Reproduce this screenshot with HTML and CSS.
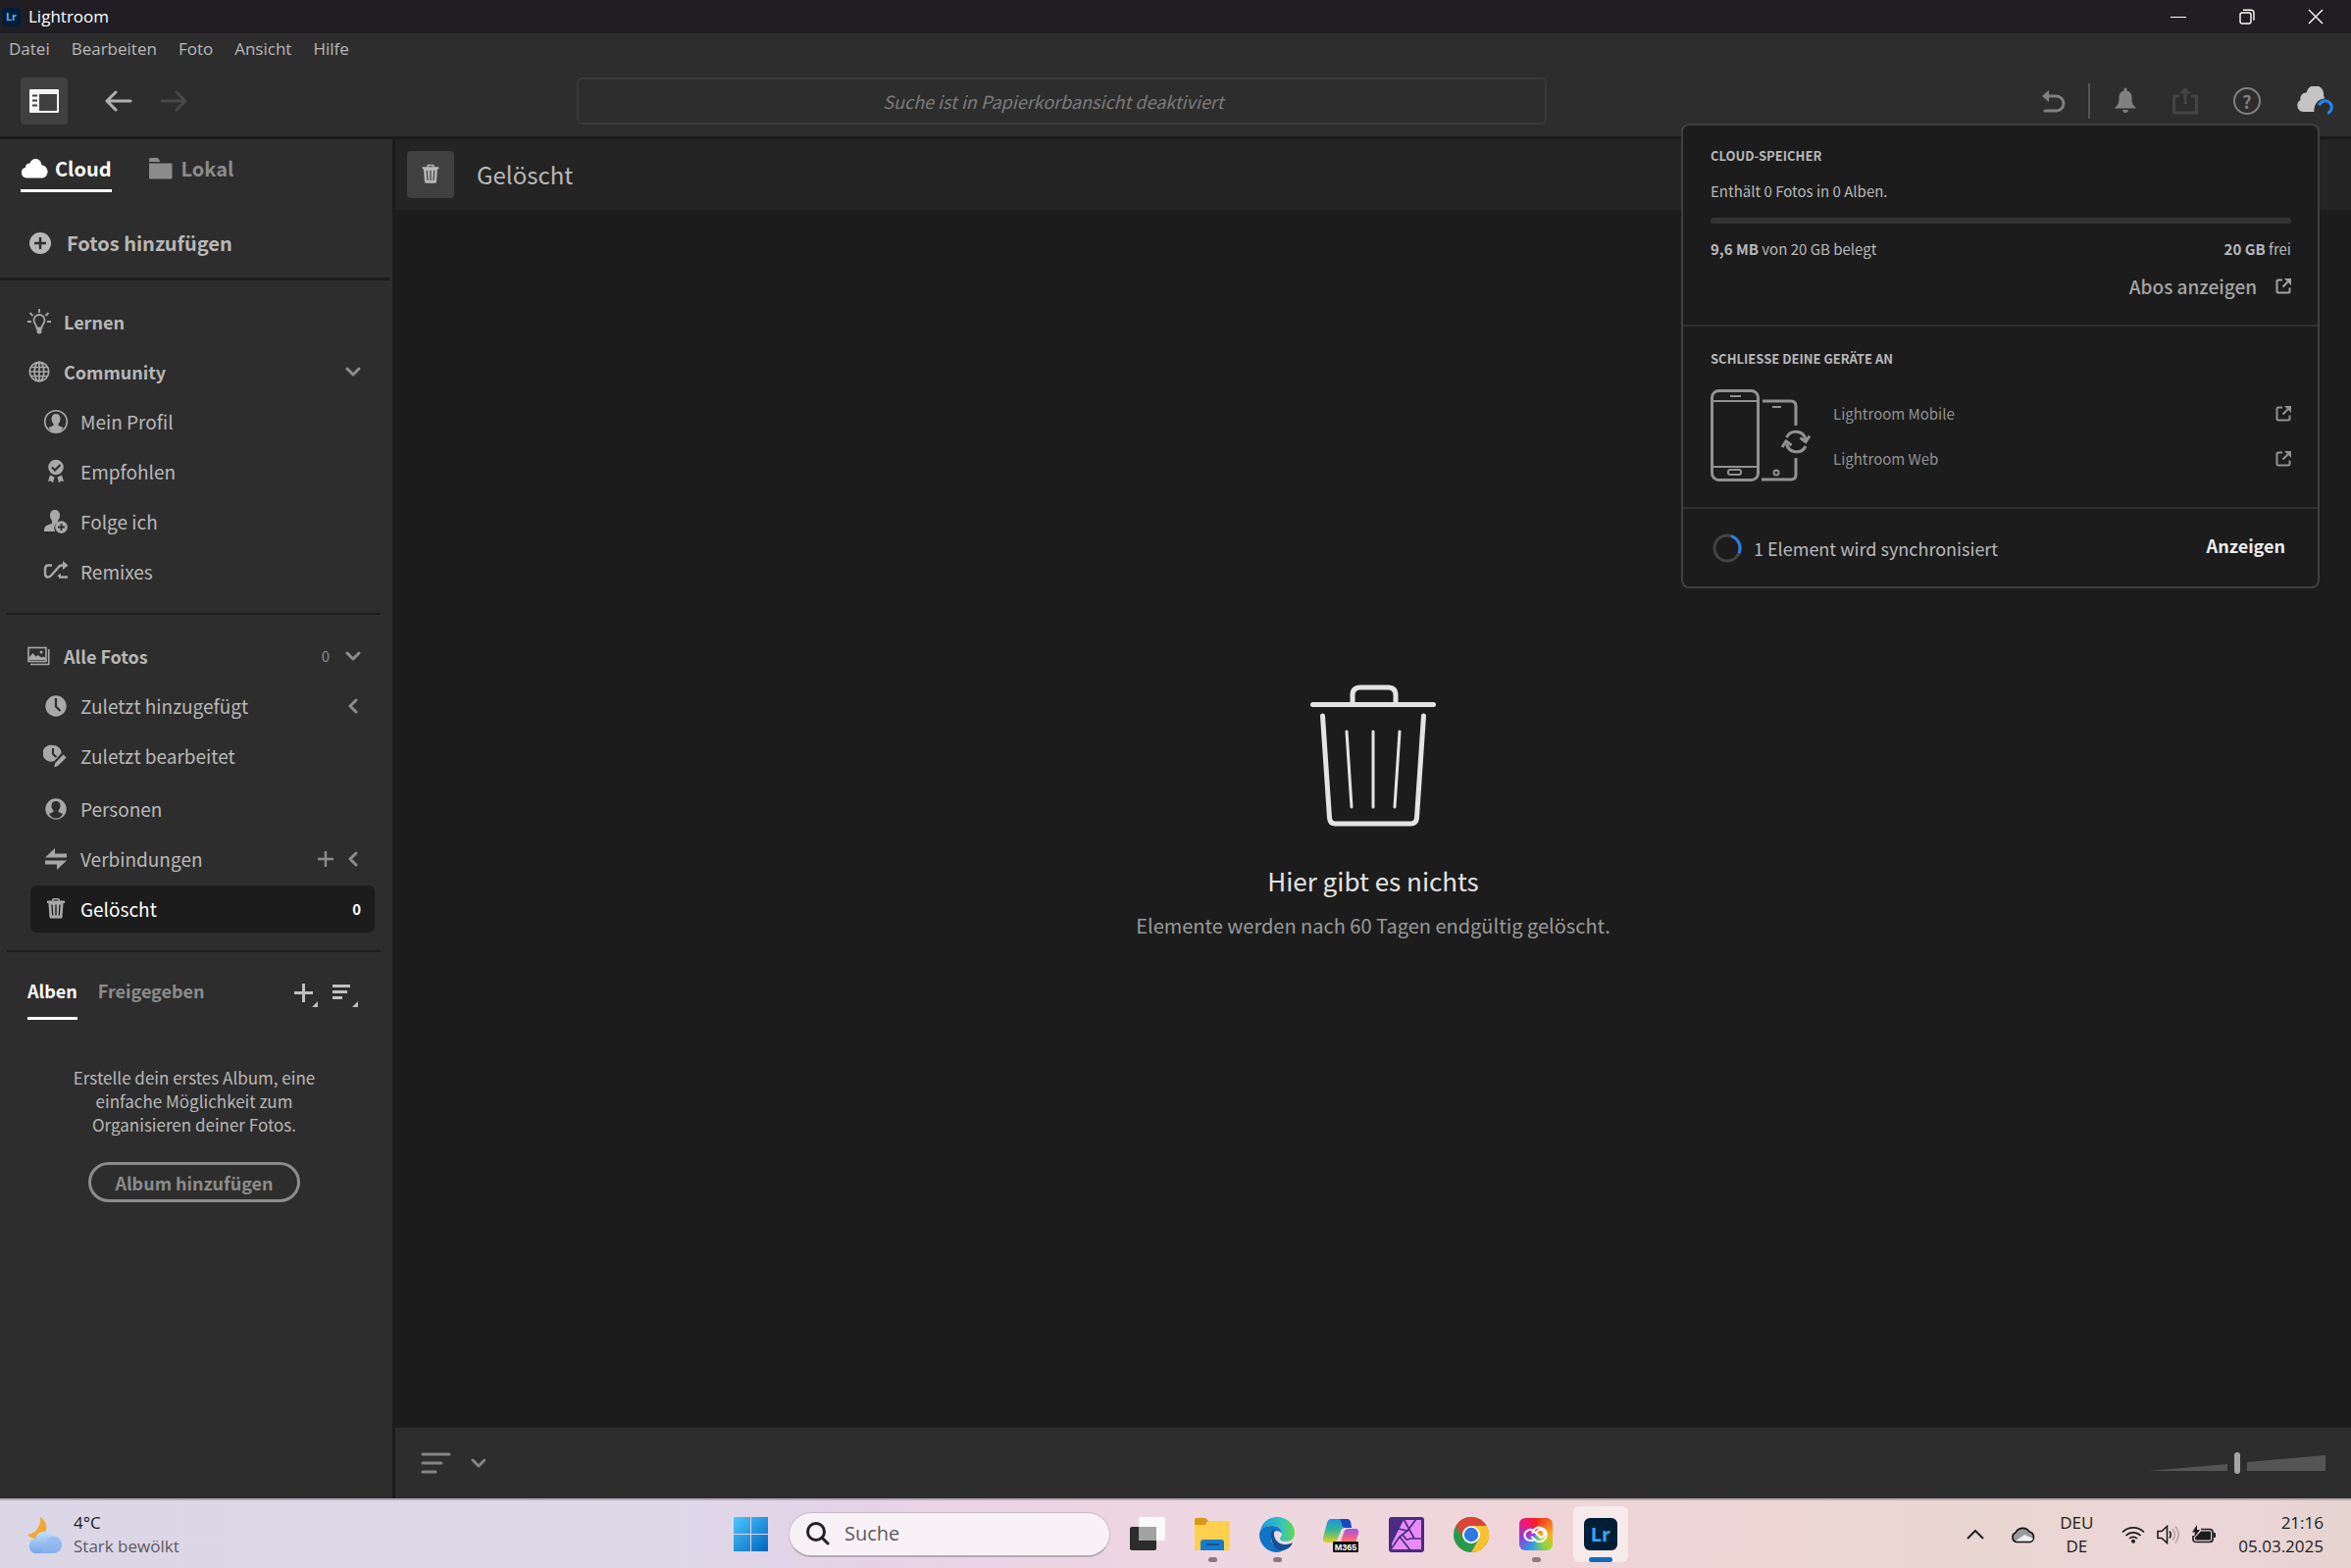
FILE: index.html
```html
<!DOCTYPE html>
<html lang="de">
  <head>
    <meta charset="UTF-8">
    <meta name="viewport" content="width=device-width, initial-scale=1.0">
    <title>Lightroom</title>
    <link rel="stylesheet" href="styles.css">
  </head>

  <body>
    <svg class="sprite" aria-hidden="true">
      <symbol id="i-down" viewBox="0 0 16 16"><path d="M2 5l6 6 6-6" fill="none" stroke="currentColor" stroke-width="3" stroke-linecap="round" stroke-linejoin="round"/></symbol>
      <symbol id="i-left" viewBox="0 0 16 16"><path d="M11 2L5 8l6 6" fill="none" stroke="currentColor" stroke-width="3" stroke-linecap="round" stroke-linejoin="round"/></symbol>
      <symbol id="i-trash" viewBox="0 0 26 26">
        <path fill="currentColor" fill-rule="evenodd" d="M4 6V4.500h5V3.500q0-1.500 1.500-1.500h5q1.500 0 1.500 1.500v1h5V7h-1.500l-1 14q0 1.500-1.500 1.500H8Q6.500 22.500 6.500 21L5.400 7H4zM10.500 4.500h5v-1h-5zM8.300 8.500l.8 11h1.300l-.8-11zM12.300 8.500v11h1.400v-11zM16.400 8.500l-.8 11h1.300l.8-11z"/>
      </symbol>
      <symbol id="i-external" viewBox="0 0 16 16">
        <path d="M7 1.500H3Q1.500 1.500 1.500 3v10q0 1.500 1.500 1.500h10q1.500 0 1.500-1.500V9.500M7.500 8.500l5-5" fill="none" stroke="currentColor" stroke-width="2"/>
        <path d="M9 0h7v7z" fill="currentColor"/>
      </symbol>
      <symbol id="i-cloud" viewBox="0 0 28 20">
        <path d="M6 19.500a5.500 5.500 0 0 1-1-10.800 4.500 4.500 0 0 1 4.500-4.200 6 6 0 0 1 11.800 1.800A6.700 6.700 0 0 1 22.500 19.500z" fill="currentColor"/>
      </symbol>
    </svg>

    <div class="titlebar">
      <span class="lr lr-small">Lr</span>
      <span class="titlebar-name">Lightroom</span>
      <div class="window-buttons">
        <button aria-label="Minimieren"><svg width="16" height="16"><path d="M0 8.500h16" stroke="#fff"/></svg></button>
        <button aria-label="Verkleinern"><svg width="16" height="16" fill="none" stroke="#fff" stroke-width="1.400"><rect x="1" y="4" width="11" height="11" rx="2"/><path d="M4 1.200h8q3 0 3 3v7.500"/></svg></button>
        <button aria-label="Schließen"><svg width="16" height="16"><path d="M1 1l14 14M15 1L1 15" stroke="#fff" stroke-width="1.400"/></svg></button>
      </div>
    </div>

    <nav class="menubar">
      <button>Datei</button>
      <button>Bearbeiten</button>
      <button>Foto</button>
      <button>Ansicht</button>
      <button>Hilfe</button>
    </nav>

    <header class="toolbar">
      <div class="toolbar-left">
        <button class="square" aria-label="Seitenleiste">
          <svg width="30" height="24" viewBox="0 0 30 24"><path fill="#f5f5f5" fill-rule="evenodd" d="M0 1q0-1 1-1h28q1 0 1 1v22q0 1-1 1H1q-1 0-1-1zM10 5v17h18V5z"/><path d="M3 6.500h5M3 11.500h5M3 16.500h5" stroke="#404040" stroke-width="2"/></svg>
        </button>
        <button class="arrow-back" aria-label="Zurück"><svg width="28" height="22" viewBox="0 0 28 22" fill="none" stroke="#b0b0b0" stroke-width="3" stroke-linecap="round" stroke-linejoin="round"><path d="M26 11H2M11 2L2 11l9 9"/></svg></button>
        <button class="arrow-next" aria-label="Vorwärts" disabled><svg width="28" height="22" viewBox="0 0 28 22" fill="none" stroke="#484848" stroke-width="3" stroke-linecap="round" stroke-linejoin="round"><path d="M2 11h24M17 2l9 9-9 9"/></svg></button>
      </div>
      <input class="search" type="search" aria-label="Suche" placeholder="Suche ist in Papierkorbansicht deaktiviert" disabled>
      <div class="toolbar-right">
        <button aria-label="Rückgängig"><svg width="24" height="24" viewBox="0 0 24 24"><path d="M3 7h11.500a7.500 7.500 0 0 1 0 15H3" fill="none" stroke="#808080" stroke-width="3" stroke-linecap="round"/><path d="M0 7l7-6v12z" fill="#808080"/></svg></button>
        <span class="toolbar-rule"></span>
        <button aria-label="Mitteilungen"><svg width="24" height="28" viewBox="0 0 24 28" fill="#808080"><path d="M10.500 3.500V2q0-1.500 1.500-1.500T13.500 2v1.500c4 1 5 4 5 7.500 0 5 1 7 4 9.500v1H1.500v-1c3-2.500 4-4.500 4-9.500 0-3.500 1-6.500 5-7.500zM9 23h6q-.5 3-3 3t-3-3z"/></svg></button>
        <button aria-label="Freigeben" disabled><svg width="28" height="30" viewBox="0 0 28 30"><path d="M8 10H2.500v17h23V10H20M14 18V6" fill="none" stroke="#444" stroke-width="3"/><path d="M8 7.500L14 1l6 6.500z" fill="#444"/></svg></button>
        <button class="help" aria-label="Hilfe">?</button>
        <button aria-label="Cloud-Speicher"><svg width="40" height="30" viewBox="0 0 40 30"><path d="M19.500 26H8A6.500 6.500 0 0 1 5.500 14a6 6 0 0 1 6-7.500A8 8 0 0 1 29 9.500q1 1.500 1 3A11.500 11.500 0 0 0 19.500 26z" fill="#c4c4c4"/><path d="M24.500 19.500a6.500 6.500 0 1 1 8.500 8" fill="none" stroke="#2680eb" stroke-width="3.200"/></svg></button>
      </div>

      <section class="popover">
        <div class="storage">
          <h2>CLOUD-SPEICHER</h2>
          <p>Enthält 0 Fotos in 0 Alben.</p>
          <div class="meter"></div>
          <div class="between"><span><b>9,6 MB</b> von 20 GB belegt</span><span><b>20 GB</b> frei</span></div>
          <a class="plans" href="#">Abos anzeigen <svg width="16" height="16"><use href="#i-external"/></svg></a>
        </div>
        <div class="devices">
          <h2>SCHLIESSE DEINE GERÄTE AN</h2>
          <div class="devices-row">
            <svg width="102" height="94" viewBox="0 0 102 94" fill="none" stroke="#929292" stroke-width="3">
              <rect x="1.500" y="1.500" width="47" height="91" rx="7"/>
              <path d="M2 12h46M2 79h46" stroke-width="2"/>
              <path d="M20 7h11M63 18h9" stroke-width="2"/>
              <rect x="18" y="82" width="13" height="5" rx="2" stroke-width="2"/>
              <path d="M53 12h29q5 0 5 5v20M52 92h30q5 0 5-5V70"/>
              <circle cx="67" cy="85" r="2.500" stroke-width="2"/>
              <path d="M77.500 49a10.500 10.500 0 0 1 19.500 2M97 58a10.500 10.500 0 0 1-19.500-2"/>
              <path d="M91.500 49.500l5.500 4 4-6M73 59l4-6 5.500 4"/>
            </svg>
            <div class="device-links">
              <a href="#">Lightroom Mobile <svg width="16" height="16"><use href="#i-external"/></svg></a>
              <a href="#">Lightroom Web <svg width="16" height="16"><use href="#i-external"/></svg></a>
            </div>
          </div>
        </div>
        <div class="sync">
          <svg width="30" height="30" fill="none" stroke-width="3"><circle cx="15" cy="15" r="13" stroke="#444"/><path d="M19 2.600a13 13 0 0 1 8 17.500" stroke="#2680eb"/></svg>
          <span>1 Element wird synchronisiert</span>
          <button>Anzeigen</button>
        </div>
      </section>
    </header>

    <div class="workspace">
      <aside class="sidebar">
        <div class="source-tabs">
          <button class="active"><svg width="28" height="20"><use href="#i-cloud"/></svg>Cloud</button>
          <button><svg width="24" height="22" viewBox="0 0 24 22" fill="#8c8c8c"><path d="M0 4V1.500Q0 0 1.500 0H9l2.500 4zM0 5.500h22.500q1 0 1 1V20q0 1.500-1.500 1.500H1.500Q0 21.500 0 20z"/></svg>Lokal</button>
        </div>
        <button class="add-photos">
          <svg width="22" height="22"><circle cx="11" cy="11" r="11" fill="#b8b8b8"/><path d="M11 5v12M5 11h12" stroke="#2d2d2d" stroke-width="2.500"/></svg>
          Fotos hinzufügen
        </button>

        <nav class="group">
          <button class="row top">
            <svg class="icon" viewBox="0 0 26 26" fill="none" stroke="currentColor" stroke-width="1.800"><path d="M10.500 19.500c0-3-3-4.500-3-8a5.500 5.500 0 0 1 11 0c0 3.500-3 5-3 8z"/><path d="M10.500 20h5v3q0 2.500-2.500 2.500T10.500 23z" fill="currentColor" stroke="none"/><path d="M13 0v4M3.500 4l3 3M22.500 4l-3 3M1 13h4M21 13h4"/></svg>
            <span>Lernen</span>
          </button>
          <button class="row top">
            <svg class="icon" viewBox="0 0 26 26" fill="none" stroke="currentColor" stroke-width="1.700"><circle cx="13" cy="13" r="9.700"/><ellipse cx="13" cy="13" rx="4.800" ry="9.700"/><path d="M13 3v20M3 13h20M4.500 8.500h17M4.500 17.500h17"/></svg>
            <span>Community</span>
            <svg class="end" width="16" height="16"><use href="#i-down"/></svg>
          </button>
          <button class="row">
            <svg class="icon" viewBox="0 0 26 26"><circle cx="13" cy="13" r="11.300" fill="none" stroke="currentColor" stroke-width="1.600"/><path fill="currentColor" d="M13 5c3 0 4.500 2 4.500 5 0 2.500-.8 4-2 5v2l5 2q-2.500 5-7.500 5t-7.500-5l5-2v-2c-1.200-1-2-2.500-2-5 0-3 1.500-5 4.500-5z"/></svg>
            <span>Mein Profil</span>
          </button>
          <button class="row">
            <svg class="icon" viewBox="0 0 26 26"><circle cx="13" cy="8.500" r="7.800" fill="currentColor"/><path d="M9 8.500l3 3 5.500-5.500" fill="none" stroke="#2d2d2d" stroke-width="2.200"/><path d="M7 16.500l4.500 2-1.500 6-2-2-3 .500zM19 16.500l-4.500 2 1.500 6 2-2 3 .500z" fill="currentColor"/></svg>
            <span>Empfohlen</span>
          </button>
          <button class="row">
            <svg class="icon" viewBox="0 0 26 26"><path fill="currentColor" d="M12 1c3.500 0 5 2.500 5 5.500 0 2.500-1 4-2 5.500v1.500a8 8 0 0 0-3 9.500H1v-2c0-3 3-5 8-6v-3C8 10.500 7 9 7 6.500 7 3.500 8.500 1 12 1z"/><circle cx="18.500" cy="18.500" r="6.300" fill="currentColor"/><path d="M18.500 15v7M15 18.500h7" stroke="#2d2d2d" stroke-width="1.800"/></svg>
            <span>Folge ich</span>
          </button>
          <button class="row">
            <svg class="icon" viewBox="0 0 26 26"><path d="M9 6.500H5.500Q2 6.500 2 10v5q0 3.500 3 3.500 2 0 3.500-2l7-8q1.500-2 3.500-2h2M16 18.500h9" fill="none" stroke="currentColor" stroke-width="2.400"/><path d="M20 2l5.500 4.500L20 11zM14 17.500l4-3v4z" fill="currentColor"/></svg>
            <span>Remixes</span>
          </button>
        </nav>

        <nav class="group">
          <button class="row top">
            <svg class="icon" viewBox="0 0 26 26" fill="none" stroke="currentColor" stroke-width="1.600"><rect x="2" y="4.500" width="18" height="14"/><path d="M22.700 6v15.500H4"/><path d="M3 17v-3l3.500-4 3 3.500 2-1.500 4 2.500 2-1 2 1.500v2z" fill="currentColor" stroke="none"/><circle cx="15" cy="9" r="1.500" fill="currentColor" stroke="none"/></svg>
            <span>Alle Fotos</span>
            <small class="end">0</small>
            <svg width="16" height="16"><use href="#i-down"/></svg>
          </button>
          <button class="row">
            <svg class="icon" viewBox="0 0 26 26"><circle cx="13" cy="13" r="10.700" fill="currentColor"/><path d="M13 5v8.500l4.500 4.500" fill="none" stroke="#2d2d2d" stroke-width="2.200"/></svg>
            <span>Zuletzt hinzugefügt</span>
            <svg class="end" width="16" height="16"><use href="#i-left"/></svg>
          </button>
          <button class="row">
            <svg class="icon" viewBox="0 0 26 26"><path fill="currentColor" d="M10 2a8.500 8.500 0 0 1 8.700 8L11.500 18A8.500 8.500 0 1 1 10 2zM20.500 11.500l3.200 3L15 23l-4 1.500 1.300-4.500z"/><path d="M10 5v6l3.500 3" fill="none" stroke="#2d2d2d" stroke-width="2"/></svg>
            <span>Zuletzt bearbeitet</span>
          </button>
          <button class="row spaced">
            <svg class="icon" viewBox="0 0 26 26"><circle cx="13" cy="13" r="10.700" fill="currentColor"/><path fill="#2d2d2d" d="M13 5c3 0 4.500 2 4.500 4.800 0 2.200-.8 3.700-2 4.700v1.500l4.500 2q-2.500 4.500-7 4.500T6 18l4.500-2v-1.500c-1.200-1-2-2.500-2-4.700C8.500 7 10 5 13 5z"/></svg>
            <span>Personen</span>
          </button>
          <button class="row">
            <svg class="icon" viewBox="0 0 26 26" fill="currentColor"><path d="M2 11.500L12 2v5.500h12v4zM24 14.500L14 24v-5.500H2v-4z"/><path d="M2 13h22" stroke="#2d2d2d" stroke-width="1"/></svg>
            <span>Verbindungen</span>
            <svg class="end" width="16" height="16"><path d="M8 0v16M0 8h16" stroke="currentColor" stroke-width="2.400"/></svg>
            <svg width="16" height="16"><use href="#i-left"/></svg>
          </button>
          <button class="row selected">
            <svg class="icon"><use href="#i-trash"/></svg>
            <span>Gelöscht</span>
            <small class="end">0</small>
          </button>
        </nav>

        <section class="albums">
          <div class="album-tabs">
            <button class="active">Alben</button>
            <button>Freigegeben</button>
            <button class="album-tool end" aria-label="Neues Album"><svg width="24" height="24" fill="#c0c0c0"><path d="M8 0h3v8h8v3h-8v8H8v-8H0V8h8zM24 18v6h-6z"/></svg></button>
            <button class="album-tool" aria-label="Sortieren"><svg width="26" height="24" fill="#c0c0c0"><path d="M0 1h18v3H0zM0 7h15v3H0zM0 13h10v3H0zM26 18v6h-6z"/></svg></button>
          </div>
          <p>Erstelle dein erstes Album, eine einfache Möglichkeit zum Organisieren deiner Fotos.</p>
          <button class="add-album">Album hinzufügen</button>
        </section>
      </aside>

      <main class="main">
        <div class="main-header">
          <span class="square"><svg width="24" height="24"><use href="#i-trash"/></svg></span>
          <h1>Gelöscht</h1>
        </div>
        <div class="empty">
          <svg width="128" height="146" viewBox="0 0 128 146" fill="none" stroke="#e4e4e4" stroke-width="5" stroke-linecap="round" stroke-linejoin="round">
            <path d="M2.500 20.500h123M43 19v-8q0-8 8-8h28q8 0 8 8v8"/>
            <path d="M12.500 32l7 104q.5 6 6 6h77q5.500 0 6-6l7-104"/>
            <path d="M37 48l5 77M64 48v77M91 48l-5 77" stroke-width="3"/>
          </svg>
          <h2>Hier gibt es nichts</h2>
          <p>Elemente werden nach 60 Tagen endgültig gelöscht.</p>
        </div>
        <footer class="main-footer">
          <button aria-label="Sortieren"><svg width="66" height="22" fill="none" stroke="#858585" stroke-width="3" stroke-linecap="round" stroke-linejoin="round"><path d="M2 2h27M2 11h19M2 20h13M53 8l6 6 6-6"/></svg></button>
          <div class="zoom">
            <svg width="180" height="22" fill="#555"><path d="M0 19l80-7v7zM100 10l80-7v16h-80z"/></svg>
            <input type="range" aria-label="Miniaturgröße" value="50">
          </div>
        </footer>
      </main>
    </div>

    <div class="taskbar">
      <button class="weather">
        <svg width="36" height="38" viewBox="0 0 36 38">
          <defs><linearGradient id="wc" y2="1" x2="0"><stop stop-color="#c4e0fa"/><stop offset="1" stop-color="#74a4ea"/></linearGradient></defs>
          <path d="M14 1c6 4 8 10 5 16-4 7-13 8-18 2 8-1 14-8 13-18z" fill="#f2a830"/>
          <path d="M8 38a8 8 0 0 1 0-15h1a9.500 9.500 0 0 1 17-3 9 9 0 0 1 2 18z" fill="url(#wc)"/>
          <path d="M20 27a8 8 0 0 1 15.500 4A8 8 0 0 1 28 38H14z" fill="#8fb8f0" opacity=".6"/>
        </svg>
        <span>4°C<br><em>Stark bewölkt</em></span>
      </button>

      <div class="apps">
        <button class="start" aria-label="Start"><svg width="36" height="36"><defs><linearGradient id="win" x2="1" y2="1"><stop stop-color="#4cc8fc"/><stop offset="1" stop-color="#0064bf"/></linearGradient></defs><path fill="url(#win)" d="M1 0h16v17H0V1zM18 0h17v17H18zM0 18h17v17H0zM18 18h17v17H18z"/></svg></button>
        <label class="task-search">
          <svg width="24" height="24" fill="none" stroke="#222" stroke-width="3"><circle cx="10" cy="10" r="8.500"/><path d="M16 16l6 6" stroke-linecap="round"/></svg>
          <input type="text" placeholder="Suche" aria-label="Suche">
        </label>
        <button class="app" aria-label="Aktive Anwendungen"><svg width="36" height="36"><rect y="10" width="27" height="24" rx="2" fill="#2c2c2c"/><rect x="9" y="0" width="27" height="24" rx="2" fill="#fafafa"/><path d="M9 10h18v14H9z" fill="#a2a2a2"/></svg></button>
        <button class="app running" aria-label="Explorer"><svg width="36" height="36"><path d="M0 3q0-2 2-2h9l4 4h-3v9H0z" fill="#d89a10"/><path d="M0 8h11l4-4h19q2 0 2 2v28H0z" fill="#ffd04e"/><path d="M6 34V26q0-3 3-3h18q3 0 3 3v8z" fill="#187cc8"/><path d="M11 28h14" stroke="#0f5696" stroke-width="2"/></svg></button>
        <button class="app running" aria-label="Edge"><svg width="36" height="36" viewBox="0 0 36 36">
          <defs><linearGradient id="e1" x2="1"><stop stop-color="#1a9ad8"/><stop offset=".6" stop-color="#32c4c0"/><stop offset="1" stop-color="#66d650"/></linearGradient></defs>
          <path d="M1 14C3 5 10 0 18 0c10 0 18 7 18 16 0 6-4 9-9 9-4 0-6-1-6-3 0-1.500 2-2 2-5 0-5-4-8-9-8-6 0-11 2-13 5z" fill="url(#e1)"/>
          <path d="M0 18C0 12 6 9 13 9c6 0 10 3 10 8-3-5-10-3-11 3-1 8 6 14 14 13-3 2-5 3-8 3C8 36 0 28 0 18z" fill="#0f74c8"/>
          <path d="M12 20c-1-4 1-7 4-8-3 6 0 15 9 16 4 .4 7-1 9-2-2 6-8 8-11 8-6 0-11-6-11-14z" fill="#124f94"/>
        </svg></button>
        <button class="app" aria-label="Microsoft 365"><svg width="38" height="36" viewBox="0 0 38 36">
          <defs><linearGradient id="m1" x2="0" y2="1"><stop stop-color="#1e90ea"/><stop offset=".5" stop-color="#38b890"/><stop offset="1" stop-color="#e8d020"/></linearGradient><linearGradient id="m2" x2="0" y2="1"><stop stop-color="#9a58e8"/><stop offset=".5" stop-color="#f05c90"/><stop offset="1" stop-color="#f89860"/></linearGradient></defs>
          <path d="M8 2h16q3 0 4 3l1 6h-7q-3 0-4 3l-3 8q-1 4-4 4H4q-5 0-4-5L4 6q1-4 4-4z" fill="url(#m1)"/><path d="M17 2h7q3 0 4 3l1 6h-7q-3-1-3-5z" fill="#1848c0"/>
          <path d="M26 12h7q4 0 3 5l-4 12H14q3-1 4-4l3-9q1-4 5-4z" fill="url(#m2)"/>
          <rect x="10" y="25" width="26" height="11" rx="1" fill="#111"/><text x="23" y="34" text-anchor="middle" class="m365">M365</text>
        </svg></button>
        <button class="app" aria-label="Affinity Photo"><svg width="36" height="36"><rect width="36" height="36" rx="3" fill="#4a2c82"/><path d="M15 3h18v30H3v-6z" fill="#e88cf4"/><path d="M10 12l9 2 9-12M15 2l11 20M19 14l-8 6L2 33M11 20l11 14M22 22h12M14 18l4 5 4-1" fill="none" stroke="#4a2c82" stroke-width="1.700"/></svg></button>
        <button class="app" aria-label="Chrome"><svg width="36" height="36"><circle cx="18" cy="18" r="18" fill="#2a9a4a"/><path d="M18 9h15.600A18 18 0 0 1 18 36l7.800-13.500z" fill="#fbc230"/><path d="M2.400 9A18 18 0 0 1 33.600 9H18a9 9 0 0 0-7.800 13.500z" fill="#dc4437"/><circle cx="18" cy="18" r="9" fill="#fff"/><circle cx="18" cy="18" r="7.200" fill="#2f78e4"/></svg></button>
        <button class="app running" aria-label="Creative Cloud"><span class="cc"><svg width="26" height="18" viewBox="0 0 26 18" fill="none" stroke="#fff" stroke-width="2.200" stroke-linecap="round"><path d="M10 15H7a5.500 5.500 0 1 1 3.500-9.800l6 5.300M9.500 7A7.200 7.200 0 1 1 17.500 16H14l-5-4.500M13.500 7.500a4 4 0 1 1 4 4.500"/></svg></span></button>
        <button class="app current" aria-label="Lightroom"><span class="lr">Lr</span></button>
      </div>

      <div class="tray">
        <button aria-label="Ausgeblendete Symbole"><svg width="18" height="12" fill="none" stroke="#222" stroke-width="2"><path d="M1 10l8-8 8 8"/></svg></button>
        <button aria-label="OneDrive"><svg width="26" height="18" viewBox="0 0 26 18"><path d="M6 16.500a5 5 0 0 1-1-9.500 8 8 0 0 1 14-1 5.500 5.500 0 0 1 1 10.500z" fill="#9a9a9a" stroke="#111" stroke-width="1.600"/><path d="M5 15.500L14 9l9 4q-1 2.500-3 2.500z" fill="#f0f0f0"/></svg></button>
        <button class="lang">DEU<br>DE</button>
        <button class="status" aria-label="Netzwerk, Ton und Akku">
          <svg width="24" height="18" viewBox="0 0 24 18" fill="none" stroke="#1c1c1c" stroke-width="1.700"><path d="M1 6.500a15.500 15.500 0 0 1 22 0M4.500 10a10.500 10.500 0 0 1 15 0M8 13a5.600 5.600 0 0 1 8 0"/><circle cx="12" cy="15.800" r="2" fill="#1c1c1c" stroke="none"/></svg>
          <svg width="24" height="20" viewBox="0 0 24 20" fill="none" stroke="#1c1c1c" stroke-width="1.600"><path d="M1 6.500h4l5.500-5v17l-5.500-5H1zM13 6.500q2.500 3.500 0 7"/><path d="M16 4q4.500 6 0 12M19 1.500q6.500 8.500 0 17" stroke="#b5a5a5"/></svg>
          <svg width="24" height="20" viewBox="0 0 24 20"><path d="M9 4.500h9q3 0 3 3v7q0 3-3 3H4q-3 0-3-3V11" fill="none" stroke="#1c1c1c" stroke-width="1.700"/><path d="M9 6.500h9q1 0 1 1v7q0 1-1 1H4q-1 0-1-1V13zM22 8h1q1 0 1 1v3q0 1-1 1h-1zM5 0L0 7.500h3L2 13l6-8H5z" fill="#1c1c1c"/></svg>
        </button>
        <button class="clock">21:16<br>05.03.2025</button>
      </div>
    </div>
  </body>
</html>
```
FILE: styles.css
```css
* {
  box-sizing: border-box;
  margin: 0;
  padding: 0;
}

html, body {
  height: 100%;
}

body {
  display: flex;
  flex-direction: column;
  background-color: #2d2d2d;
  color: #b8b8b8;
  font-family: "Noto Sans CJK JP", "Open Sans", sans-serif;
  font-size: 19px;
  line-height: 24px;
  overflow: hidden;
}

button, input {
  font: inherit;
  color: inherit;
  background: none;
  border: none;
}

a {
  color: inherit;
  text-decoration: none;
}

svg {
  display: block;
  flex: none;
}

.sprite {
  position: absolute;
  width: 0;
  height: 0;
}

.end {
  margin-left: auto;
}

/* window frame */

.titlebar {
  display: flex;
  align-items: center;
  height: 34px;
  padding-left: 2px;
  background-color: #201e23;
  color: #fff;
  font-family: "Open Sans", sans-serif;
  font-size: 17px;
}

.titlebar-name {
  margin-left: 8px;
}

.window-buttons {
  display: flex;
  gap: 54px;
  margin-left: auto;
  padding-right: 28px;
}

.lr {
  display: flex;
  align-items: center;
  justify-content: center;
  width: 34px;
  height: 33px;
  border-radius: 6px;
  background-color: #001e36;
  color: #31a8ff;
  font-family: "Open Sans", sans-serif;
  font-size: 20px;
  font-weight: 700;
  line-height: 24px;
}

.lr-small {
  width: 19px;
  height: 19px;
  border-radius: 4px;
  color: #5cb4f4;
  font-size: 11px;
  line-height: 16px;
}

.menubar {
  display: flex;
  gap: 22px;
  height: 32px;
  padding-left: 9px;
  font-family: "Open Sans", sans-serif;
  font-size: 17px;
}

.toolbar {
  position: relative;
  display: flex;
  align-items: center;
  flex: none;
  height: 76px;
  border-bottom: 3px solid #1c1c1c;
}

.toolbar-left {
  display: flex;
  align-items: center;
  width: 588px;
  padding-left: 21px;
}

.square {
  display: flex;
  align-items: center;
  justify-content: center;
  width: 48px;
  height: 48px;
  border-radius: 4px;
  background-color: #404040;
}

.arrow-back {
  margin-left: 38px;
}

.arrow-next {
  margin-left: 28px;
}

.search {
  flex: 1;
  min-width: 0;
  height: 48px;
  border: 2px solid #3a3a3a;
  border-radius: 6px;
  text-align: center;
}

.search::placeholder {
  color: #7c7c7c;
  font-size: 18px;
  font-style: italic;
}

.toolbar-right {
  display: flex;
  align-items: center;
  justify-content: flex-end;
  gap: 35px;
  width: 820px;
  padding-right: 17px;
}

.toolbar-right button:first-child {
  margin-right: -12px;
}

.toolbar-rule {
  width: 2px;
  height: 36px;
  margin-right: -11px;
  background-color: #555;
}

.help {
  width: 28px;
  height: 28px;
  border: 2px solid #808080;
  border-radius: 50%;
  color: #808080;
  font-size: 18px;
  font-weight: 700;
  line-height: 22px;
}

/* cloud storage popover */

.popover {
  position: absolute;
  top: 60px;
  right: 32px;
  z-index: 1;
  width: 651px;
  border: 2px solid #404040;
  border-radius: 8px;
  background-color: #1c1c1c;
  font-size: 15px;
}

.popover h2 {
  font-size: 13px;
  font-weight: 700;
  line-height: 24px;
}

.storage {
  height: 203px;
  padding: 19px 27px 0 28px;
}

.storage p {
  margin: 12px 0 15px;
}

.meter {
  height: 6px;
  border-radius: 3px;
  background-color: #333;
}

.between {
  display: flex;
  justify-content: space-between;
  margin: 14px 0;
}

.plans {
  display: flex;
  align-items: center;
  justify-content: flex-end;
  gap: 19px;
  font-size: 19px;
  font-weight: 500;
  color: #a5a5a5;
}

.devices {
  height: 186px;
  padding: 21px 27px 0 28px;
  border-top: 2px solid #303030;
  color: #929292;
}

.devices h2 {
  color: #b8b8b8;
}

.devices-row {
  display: flex;
  gap: 23px;
  margin-top: 19px;
}

.device-links {
  flex: 1;
  display: flex;
  flex-direction: column;
  gap: 22px;
  padding-top: 13px;
}

.device-links a {
  display: flex;
  align-items: center;
  justify-content: space-between;
}

.sync {
  display: flex;
  align-items: center;
  gap: 12px;
  height: 81px;
  padding: 0 33px 0 30px;
  border-top: 2px solid #303030;
  font-size: 18px;
}

.sync button {
  margin-left: auto;
  padding-bottom: 5px;
  color: #eee;
  font-weight: 700;
}

/* sidebar */

.workspace {
  display: flex;
  flex: 1;
  min-height: 0;
}

.sidebar {
  width: 400px;
  flex: none;
}

.source-tabs {
  display: flex;
  gap: 38px;
  padding: 15px 21px 0;
  font-size: 20px;
}

.source-tabs button {
  display: flex;
  align-items: center;
  gap: 9px;
  height: 39px;
  padding-bottom: 6px;
  border-bottom: 3px solid transparent;
  color: #8c8c8c;
  font-weight: 700;
}

.source-tabs .active {
  gap: 7px;
}

.source-tabs .active, .album-tabs .active {
  border-bottom: 3px solid #fff;
  color: #fff;
}

.add-photos {
  display: flex;
  align-items: center;
  gap: 16px;
  width: 397px;
  height: 90px;
  padding: 17px 30px 0;
  border-bottom: 3px solid #1c1c1c;
  font-size: 20px;
  font-weight: 700;
}

.group {
  display: flex;
  flex-direction: column;
  gap: 3px;
  padding: 18px 0 17px;
}

.group::after {
  content: "";
  height: 2px;
  margin: 15px 12px -17px 7px;
  background-color: #1c1c1c;
}

.row {
  display: flex;
  align-items: center;
  gap: 12px;
  height: 48px;
  margin: 0 18px 0 31px;
  padding: 0 14px 0 13px;
  border-radius: 6px;
}

.row svg {
  color: #8c8c8c;
}

.row .icon {
  width: 26px;
  height: 26px;
  color: #a8a8a8;
}

.row.top {
  margin-left: 15px;
  padding-left: 12px;
  font-size: 18px;
  font-weight: 700;
}

.row small {
  width: 16px;
  color: #8c8c8c;
  font-size: 15px;
  font-weight: 400;
}

.row.spaced {
  margin-top: 3px;
}

.row.selected {
  background-color: #1c1c1c;
  color: #fff;
}

.row.selected small {
  color: #fff;
  font-weight: 700;
  text-align: right;
}

.albums {
  text-align: center;
}

.album-tabs {
  display: flex;
  align-items: flex-start;
  gap: 21px;
  padding: 27px 35px 0 28px;
  color: #8c8c8c;
  font-size: 18px;
  font-weight: 700;
}

.album-tabs .active {
  height: 42px;
  padding-bottom: 15px;
}

.album-tabs .album-tool {
  padding-top: 5px;
}

.album-tool.end {
  margin-right: -6px;
}

.albums p {
  width: 280px;
  margin: 47px auto 26px 58px;
  font-size: 17px;
}

.add-album {
  display: block;
  width: 216px;
  height: 41px;
  margin-left: 90px;
  border: 3px solid #8c8c8c;
  border-radius: 21px;
  color: #8c8c8c;
  font-size: 18px;
  font-weight: 700;
}

/* main area */

.main {
  display: flex;
  flex-direction: column;
  flex: 1;
  min-width: 0;
  border-left: 3px solid #1c1c1c;
  background-color: #1c1c1c;
}

.main-header {
  display: flex;
  align-items: center;
  gap: 23px;
  height: 72px;
  padding-left: 12px;
  background-color: #242424;
}

.main-header h1 {
  font-size: 24px;
  font-weight: 400;
}

.empty {
  display: flex;
  flex-direction: column;
  align-items: center;
  justify-content: center;
  flex: 1;
  padding-bottom: 16px;
}

.empty h2 {
  margin: 38px 0 18px;
  color: #e4e4e4;
  font-size: 26px;
  font-weight: 400;
  line-height: 32px;
}

.empty p {
  color: #9a9a9a;
  font-size: 20px;
}

.main-footer {
  display: flex;
  align-items: center;
  justify-content: space-between;
  height: 72px;
  padding: 0 26px;
  background-color: #2d2d2d;
}

.zoom {
  display: grid;
}

.zoom svg, .zoom input {
  grid-area: 1 / 1;
}

.zoom input {
  width: 180px;
  height: 22px;
  appearance: none;
}

.zoom input::-webkit-slider-thumb {
  appearance: none;
  width: 6px;
  height: 22px;
  border-radius: 3px;
  background-color: #a5a5a5;
}

/* taskbar */

.taskbar {
  display: flex;
  align-items: center;
  flex: none;
  height: 71px;
  border-top: 2px solid #b4aab2;
  background: linear-gradient(90deg, #dbd7e6 0%, #dcd8e8 28%, #e6d2e8 37%, #ecd4e2 46%, #eed8e0 54%, #f0d4d6 68%, #e8d6d0 84%, #ecd6d8 93%, #e6d4d0 100%);
  color: #1c1c1c;
  font-family: "Open Sans", sans-serif;
  font-size: 17px;
}

.weather {
  display: flex;
  align-items: center;
  gap: 12px;
  flex: 1;
  padding-left: 27px;
  text-align: left;
}

.weather em {
  color: #5c5860;
  font-style: normal;
}

.apps {
  display: flex;
  align-items: center;
  gap: 10px;
  padding-left: 12px;
}

.start {
  margin-right: 10px;
}

.task-search {
  display: flex;
  align-items: center;
  gap: 15px;
  width: 328px;
  height: 46px;
  padding: 0 17px;
  border: 1px solid #cabcc8;
  border-bottom: 2px solid #b4a8b4;
  border-radius: 23px;
  background-color: #f8f2f7;
}

.task-search input {
  flex: 1;
  min-width: 0;
  font-size: 20px;
}

.task-search input::placeholder {
  color: #5c5860;
}

.app {
  position: relative;
  display: flex;
  align-items: center;
  justify-content: center;
  width: 56px;
  height: 57px;
  border-radius: 6px;
}

.app.current {
  background-color: #f6eaeb;
}

.app.running::after, .app.current::after {
  content: "";
  position: absolute;
  bottom: 0;
  left: 24px;
  width: 9px;
  height: 5px;
  border-radius: 3px;
  background-color: #8c7a7e;
}

.app.current::after {
  left: 16px;
  width: 24px;
  background-color: #0f6cbd;
}

.m365 {
  fill: #fff;
  font: 700 9px "Liberation Sans", sans-serif;
}

.cc {
  display: flex;
  align-items: center;
  justify-content: center;
  width: 34px;
  height: 33px;
  border-radius: 6px;
  background: conic-gradient(#f52020, #f8b020 25%, #9ad830 38%, #2ca0e8 55%, #9838d8 72%, #f01878 88%, #f52020);
}

.tray {
  display: flex;
  align-items: center;
  justify-content: flex-end;
  gap: 27px;
  flex: 1;
  padding-right: 28px;
}

.lang {
  width: 40px;
  margin-left: -6px;
}

.status {
  display: flex;
  align-items: center;
  gap: 12px;
  margin-left: -1px;
}

.clock {
  margin-left: -4px;
  text-align: right;
}
```
